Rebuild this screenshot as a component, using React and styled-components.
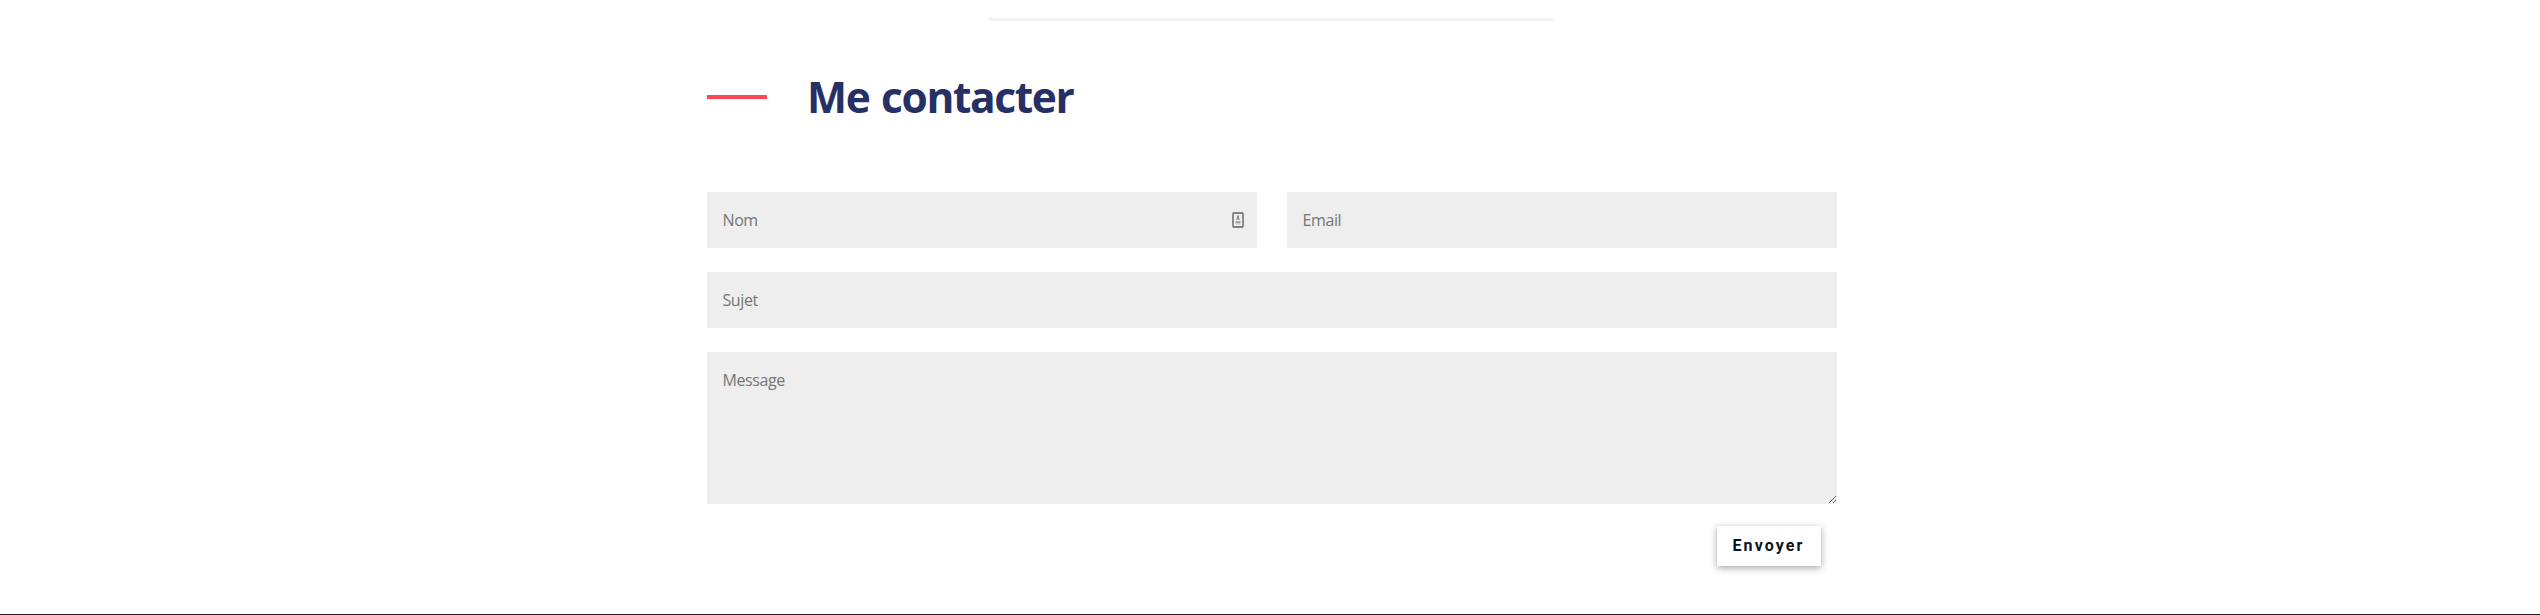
import React from "react";
import styled, { createGlobalStyle } from "styled-components";

const GlobalStyle = createGlobalStyle`
  *, *::before, *::after { box-sizing: border-box; }
  body {
    margin: 0;
    background: #fff;
    font-family: "Segoe UI", "Open Sans", "Noto Sans", sans-serif;
  }
`;

const Page = styled.main`
  display: flex;
  flex-direction: column;
  height: 615px;
  overflow: hidden;
  padding: 18px 0 0;
  border-bottom: 1px solid #212024;
`;

const Container = styled.section`
  width: 1130px;
  margin-left: 707px;
`;

const Divider = styled.hr`
  width: 565px;
  height: 3px;
  margin: 0 282px;
  border: 0;
  background: #f2f2f5;
`;

const Title = styled.h2`
  display: flex;
  align-items: center;
  gap: 40px;
  height: 60px;
  margin: 46px 0 65px;
  color: #263065;
  font-size: 42.5px;
  font-weight: 700;
  letter-spacing: -1.4px;
  word-spacing: 2px;
  line-height: 60px;

  &::before {
    content: "";
    width: 60px;
    height: 4px;
    background: #ff4655;
  }
`;

const Form = styled.form`
  display: grid;
  grid-template-columns: 1fr 1fr;
  gap: 24px 30px;
`;

const Field = styled.label`
  display: flex;
  align-items: center;
  height: 56px;
  padding-right: 13px;
  background: #eee;
  grid-column: ${({ $wide }) => ($wide ? "1 / -1" : "auto")};
`;

const Input = styled.input`
  flex: 1;
  height: 56px;
  padding: 0 0 0 15.5px;
  border: 0;
  outline: 0;
  background: transparent;
  font: 400 16px/22px "Segoe UI", "Open Sans", "Noto Sans", sans-serif;
  letter-spacing: -0.4px;

  &::placeholder { color: #757575; }
`;

const Message = styled.textarea`
  display: block;
  grid-column: 1 / -1;
  height: 152px;
  padding: 17px 15.5px;
  border: 0;
  outline: 0;
  background: #eee;
  resize: vertical;
  font: 400 16px/22px "Segoe UI", "Open Sans", "Noto Sans", sans-serif;
  letter-spacing: -0.4px;

  &::placeholder { color: #757575; }
`;

const Submit = styled.button`
  grid-column: 1 / -1;
  justify-self: end;
  width: 104px;
  height: 40px;
  margin: -2px 16px 0 0;
  padding: 0 0 0 15.5px;
  border: 0;
  background: #fff;
  box-shadow: 0 2px 7px rgba(0, 0, 0, 0.35);
  color: #0c1220;
  font: 700 16px/40px Roboto, sans-serif;
  letter-spacing: 2.1px;
  text-align: left;
`;

const AutofillIcon = () => (
  <svg width="12" height="16" viewBox="0 0 12 16" fill="none" aria-hidden="true">
    <rect x="1" y="1" width="10" height="14" rx="1" stroke="#808080" strokeWidth="1.8" />
    <path d="M6 3.5V7" stroke="#858585" strokeWidth="2" />
    <path d="M4 7.2h4" stroke="#aaa" strokeWidth="1.5" />
    <path d="M3.5 10.3h5" stroke="#999" strokeWidth="2" />
    <path d="M4 12.2h4" stroke="#ccc" />
  </svg>
);

export default function App() {
  return (
    <>
      <GlobalStyle />
      <Page>
        <Container>
          <Divider />
          <Title>Me contacter</Title>
          <Form>
            <Field>
              <Input placeholder="Nom" />
              <AutofillIcon />
            </Field>
            <Field>
              <Input type="email" placeholder="Email" />
            </Field>
            <Field $wide>
              <Input placeholder="Sujet" />
            </Field>
            <Message placeholder="Message" />
            <Submit type="button">Envoyer</Submit>
          </Form>
        </Container>
      </Page>
    </>
  );
}
